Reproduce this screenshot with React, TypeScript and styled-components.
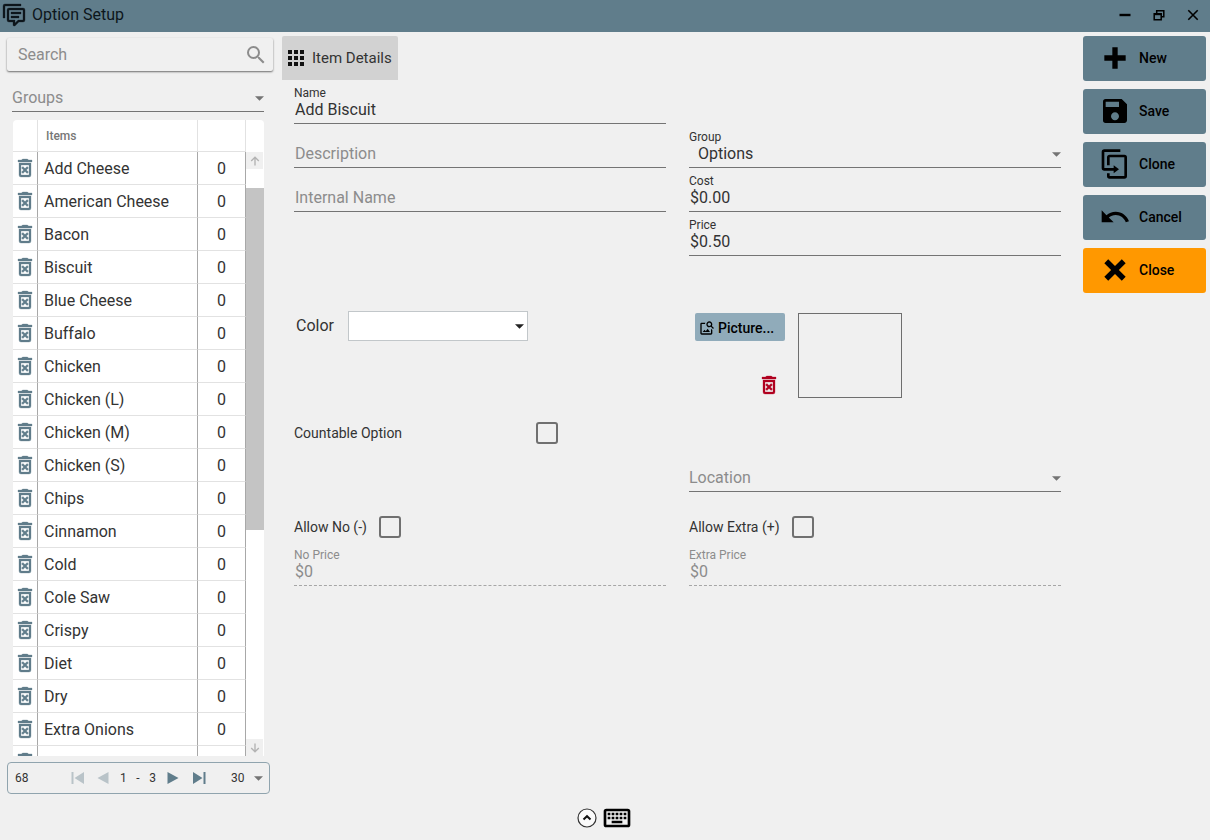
import React, { useId } from "react";
import styled, { createGlobalStyle, css } from "styled-components";
import { MdApps, MdSave, MdSearch, MdUndo } from "react-icons/md";

const slate = "#607d8b";
const ink = "#333333";
const muted = "#8c8c8c";
const line = "#747474";
const surface = "#f0f0f0";

const paths = {
  comments:
    "M12,23A1,1 0 0,1 11,22V19H7A2,2 0 0,1 5,17V7A2,2 0 0,1 7,5H21A2,2 0 0,1 23,7V17A2,2 0 0,1 21,19H16.9L13.2,22.71C13,22.89 12.76,23 12.5,23H12M13,17V20.08L16.08,17H21V7H7V17H13M3,15H1V3A2,2 0 0,1 3,1H19V3H3V15M9,9H19V11H9V9M9,13H17V15H9V13Z",
  trash:
    "M14.12,10.47L12,12.59L9.87,10.47L8.46,11.88L10.59,14L8.47,16.12L9.88,17.53L12,15.41L14.12,17.53L15.53,16.12L13.41,14L15.53,11.88L14.12,10.47M15.5,4L14.5,3H9.5L8.5,4H5V6H19V4H15.5M6,19A2,2 0 0,0 8,21H16A2,2 0 0,0 18,19V7H6V19M8,9H16V19H8V9Z",
  clone:
    "M11,17H4A2,2 0 0,1 2,15V3A2,2 0 0,1 4,1H16V3H4V15H11V13L15,16L11,19V17M19,21V7H8V13H6V7A2,2 0 0,1 8,5H19A2,2 0 0,1 21,7V21A2,2 0 0,1 19,23H8A2,2 0 0,1 6,21V19H8V21H19Z",
  plus: "M20 14H14V20H10V14H4V10H10V4H14V10H20V14Z",
  cross:
    "M20 6.91L17.09 4L12 9.09L6.91 4L4 6.91L9.09 12L4 17.09L6.91 20L12 14.91L17.09 20L20 17.09L14.91 12L20 6.91Z",
  imageSearch:
    "M15.5,9C16.2,9 16.79,8.76 17.27,8.27C17.76,7.79 18,7.2 18,6.5C18,5.83 17.76,5.23 17.27,4.73C16.79,4.23 16.2,4 15.5,4C14.83,4 14.23,4.23 13.73,4.73C13.23,5.23 13,5.83 13,6.5C13,7.2 13.23,7.79 13.73,8.27C14.23,8.76 14.83,9 15.5,9M19.31,8.91L22.41,12L21,13.41L17.86,10.31C17.08,10.78 16.28,11 15.47,11C14.22,11 13.16,10.58 12.3,9.7C11.45,8.83 11,7.77 11,6.5C11,5.27 11.45,4.2 12.33,3.33C13.2,2.45 14.27,2 15.5,2C16.77,2 17.83,2.45 18.7,3.33C19.58,4.2 20,5.27 20,6.5C20,7.33 19.78,8.13 19.31,8.91M16.5,18H5.5L8.25,14.5L10.22,16.83L12.94,13.31L16.5,18M18,13L20,15V20C20,20.55 19.81,21 19.41,21.4C19,21.79 18.53,22 18,22H4C3.45,22 3,21.79 2.6,21.4C2.21,21 2,20.55 2,20V6C2,5.47 2.21,5 2.6,4.59C3,4.19 3.45,4 4,4H9.5C9.2,4.64 9.03,5.31 9,6H4V20H18V13Z",
  keyboard:
    "M4,5A2,2 0 0,0 2,7V17A2,2 0 0,0 4,19H20A2,2 0 0,0 22,17V7A2,2 0 0,0 20,5H4M4,7H20V17H4V7M5,8V10H7V8H5M8,8V10H10V8H8M11,8V10H13V8H11M14,8V10H16V8H14M17,8V10H19V8H17M5,11V13H7V11H5M8,11V13H10V11H8M11,11V13H13V11H11M14,11V13H16V11H14M17,11V13H19V11H17M8,14V16H16V14H8Z",
};

const Glyph = ({ path, size, bold }: { path: string; size: number; bold?: boolean }) => (
  <svg
    width={size}
    height={size}
    viewBox="0 0 24 24"
    fill="currentColor"
    stroke={bold ? "currentColor" : "none"}
    strokeWidth="0.3"
    aria-hidden="true"
  >
    <path d={path} />
  </svg>
);

const GlobalStyle = createGlobalStyle`
  *, *::before, *::after { box-sizing: border-box; }
  body {
    margin: 0;
    background: ${surface};
    color: ${ink};
    font-family: Roboto, "Liberation Sans", sans-serif;
    font-size: 16px;
    line-height: 20px;
  }
  button, input, select { font: inherit; color: inherit; margin: 0; border-radius: 0; }
  svg { display: block; flex: none; }
`;

const Window = styled.div`
  display: flex;
  flex-direction: column;
  height: 100vh;
`;

const PlainButton = styled.button`
  display: flex;
  align-items: center;
  justify-content: center;
  padding: 0;
  border: 0;
  background: none;
  cursor: pointer;
`;

/* Title bar */

const TitleBar = styled.header`
  display: flex;
  align-items: center;
  flex: none;
  height: 32px;
  padding: 0 0 2px 2px;
  background: ${slate};
  color: #0d161b;
`;

const Title = styled.h1`
  flex: 1;
  margin: 0 0 0 6px;
  font-size: 16px;
  font-weight: 400;
  line-height: 20px;
`;

const WindowButton = styled(PlainButton)`
  width: 34px;
  height: 28px;
`;

/* Sidebar */

const Body = styled.div`
  display: flex;
  flex: 1;
  min-height: 0;
`;

const Sidebar = styled.aside`
  display: flex;
  flex-direction: column;
  flex: none;
  width: 282px;
  padding: 6px 9px 2px 7px;
`;

const SearchBox = styled.label`
  display: flex;
  align-items: center;
  flex: none;
  height: 33px;
  padding: 0 5px 0 11px;
  border-radius: 2px;
  background: ${surface};
  box-shadow: 0 1px 2px rgba(0, 0, 0, 0.55);
  color: ${muted};
`;

const SearchInput = styled.input`
  flex: 1;
  min-width: 0;
  padding: 0;
  border: 0;
  outline: 0;
  background: none;
  &::placeholder { color: ${muted}; opacity: 1; }
`;

const GroupFilter = styled.div`
  margin: 17px 9px 8px 5px;
`;

const ListPanel = styled.div`
  display: flex;
  flex: 1;
  min-height: 0;
  margin: 0 9px 6px 6px;
  overflow: hidden;
  border-radius: 4px 4px 0 0;
  background: #ffffff;
`;

const ListViewport = styled.div`
  flex: 1;
  min-width: 0;
  overflow: hidden;
`;

const ItemTable = styled.table`
  width: 100%;
  table-layout: fixed;
  border-collapse: separate;
  border-spacing: 0;
`;

const HeadCell = styled.th<{ $width?: number }>`
  width: ${(p) => (p.$width ? `${p.$width}px` : "auto")};
  height: 32px;
  padding: 0 8px;
  border-right: 1px solid #e2e2e2;
  border-bottom: 1px solid #e2e2e2;
  color: #777777;
  font-size: 12px;
  font-weight: 500;
  line-height: 16px;
  text-align: left;
`;

const Cell = styled.td<{ $icon?: boolean; $center?: boolean }>`
  height: 33px;
  padding: ${(p) => (p.$icon ? "0" : p.$center ? "2px 0 0" : "2px 6px 0")};
  border-right: 1px solid #a8a8a8;
  border-bottom: 1px solid #e2e2e2;
  line-height: 20px;
  text-align: ${(p) => (p.$center ? "center" : "left")};
  white-space: nowrap;
`;

const RowDelete = styled(PlainButton)`
  width: 24px;
  height: 32px;
  color: ${slate};
`;

const ScrollColumn = styled.div`
  display: flex;
  flex-direction: column;
  flex: none;
  width: 18px;
  padding-top: 32px;
`;

const ScrollButton = styled(PlainButton)`
  flex: none;
  width: 17px;
  height: 17px;
  background: ${surface};
  color: #b4b4b4;
`;

const ScrollTrack = styled.div`
  flex: 1;
  padding-top: 19px;
`;

const ScrollThumb = styled.div`
  height: 62%;
  background: #c4c4c4;
`;

const Pager = styled.nav`
  display: flex;
  align-items: center;
  flex: none;
  height: 32px;
  margin-right: 3px;
  padding: 0 6px 0 7px;
  border: 1px solid #90a4ae;
  border-radius: 4px;
  font-size: 12px;
  line-height: 16px;
`;

const PagerTotal = styled.span`
  width: 49px;
`;

const PagerButton = styled(PlainButton)`
  width: 26px;
  height: 24px;
  color: ${slate};
  &:disabled { color: #b9c3c8; }
`;

const PagerRange = styled.span`
  display: flex;
  justify-content: space-between;
  width: 44px;
  padding: 0 4px;
`;

const PagerSize = styled.div`
  flex: 1;
  margin-left: 19px;
`;

/* Form */

const Main = styled.main`
  flex: 1;
  min-width: 0;
  padding-top: 4px;
`;

const Tab = styled(PlainButton)`
  height: 44px;
  padding: 0 6px 0 2px;
  gap: 4px;
  border-radius: 2px 2px 0 0;
  background: #d2d2d2;
  font-size: 15px;
  svg { color: #111111; }
`;

const Form = styled.form`
  display: flex;
  flex-direction: column;
  padding: 0 22px 0 12px;
`;

const Columns = styled.div<{ $top?: number }>`
  display: grid;
  grid-template-columns: 1fr 1fr;
  column-gap: 23px;
  margin-top: ${(p) => p.$top ?? 0}px;
`;

const FieldColumn = styled.div<{ $skip?: boolean }>`
  display: flex;
  flex-direction: column;
  padding-top: ${(p) => (p.$skip ? 44 : 0)}px;
`;

const FieldBox = styled.div<{ $disabled?: boolean }>`
  display: flex;
  flex-direction: column;
  justify-content: flex-end;
  height: 44px;
  padding-bottom: 3px;
  border-bottom: 1px ${(p) => (p.$disabled ? "dashed #a6a6a6" : `solid ${line}`)};
  color: ${(p) => (p.$disabled ? muted : ink)};
`;

const FieldLabel = styled.label`
  font-size: 12px;
  line-height: 14px;
`;

const FieldInput = styled.input`
  width: 100%;
  height: 20px;
  padding: 0 1px;
  border: 0;
  outline: 0;
  background: none;
  &::placeholder { color: ${muted}; opacity: 1; }
`;

const SelectFrame = styled.div<{ $compact?: boolean; $boxed?: boolean }>`
  display: grid;
  grid-template-columns: minmax(0, 1fr) 9px;
  align-items: center;
  color: ${(p) => (p.$boxed ? "#222222" : line)};
  ${(p) =>
    p.$compact &&
    css`
      padding-bottom: 3px;
      border-bottom: 1px solid ${line};
    `}
  ${(p) =>
    p.$boxed &&
    css`
      width: 180px;
      height: 30px;
      padding: 0 3px;
      border: 1px solid #c2c7ca;
      background: #ffffff;
    `}
  svg { grid-area: 1 / 2; pointer-events: none; }
`;

const Select = styled.select<{ $muted?: boolean; $indent?: number }>`
  grid-area: 1 / 1 / 2 / 3;
  width: 100%;
  height: 20px;
  padding: 0 16px 0 ${(p) => p.$indent ?? 0}px;
  appearance: none;
  border: 0;
  outline: 0;
  background: none;
  color: ${(p) => (p.$muted ? muted : ink)};
`;

const Caret = () => (
  <svg width="9" height="5" viewBox="0 0 9 5" fill="currentColor" aria-hidden="true">
    <path d="M0 0.2H9L4.5 4.8Z" />
  </svg>
);

const ColorRow = styled.div`
  display: flex;
  align-items: center;
  align-self: start;
  padding-left: 2px;
  gap: 14px;
`;

const PictureRow = styled.div`
  display: flex;
  gap: 13px;
  padding: 2px 0 0 6px;
`;

const PictureActions = styled.div`
  display: flex;
  flex-direction: column;
  align-items: flex-end;
  justify-content: space-between;
`;

const PictureButton = styled(PlainButton)`
  width: 90px;
  height: 28px;
  justify-content: flex-start;
  padding: 2px 0 0 4px;
  gap: 3px;
  border-radius: 2px;
  background: #90abba;
  color: #000000;
  font-size: 14px;
  font-weight: 500;
`;

const ClearPicture = styled(PlainButton)`
  width: 32px;
  height: 26px;
  color: #b00020;
`;

const PicturePreview = styled.div`
  width: 104px;
  height: 85px;
  border: 1px solid #6e6e6e;
`;

const CheckRow = styled.label<{ $wide?: boolean }>`
  display: flex;
  align-items: center;
  gap: 12px;
  font-size: 14px;
  span { width: ${(p) => (p.$wide ? "230px" : "auto")}; }
`;

const CheckBox = styled.input`
  width: 22px;
  height: 22px;
  appearance: none;
  border: 2px solid #707070;
  border-radius: 3px;
  &:checked { background: ${slate}; }
`;

/* Actions and footer */

const Actions = styled.div`
  display: flex;
  flex-direction: column;
  flex: none;
  gap: 8px;
  width: 127px;
  padding: 4px 4px 0 0;
`;

const ActionButton = styled(PlainButton)<{ $accent?: boolean }>`
  justify-content: flex-start;
  height: 45px;
  padding: 0 0 1px 16px;
  gap: 8px;
  border-radius: 3px;
  background: ${(p) => (p.$accent ? "#ff9800" : slate)};
  color: #000000;
  font-size: 14px;
  font-weight: 500;
`;

const ActionIcon = styled.span`
  display: flex;
  justify-content: center;
  width: 32px;
`;

const Footer = styled.footer`
  display: flex;
  align-items: center;
  justify-content: center;
  flex: none;
  height: 44px;
  gap: 4px;
  color: #000000;
`;

type FieldProps = { label?: string; name: string; value?: string; disabled?: boolean };

const TextField = ({ label, name, value, disabled }: FieldProps) => {
  const id = useId();
  return (
    <FieldBox $disabled={disabled}>
      {label && <FieldLabel htmlFor={id}>{label}</FieldLabel>}
      <FieldInput
        id={id}
        aria-label={label ? undefined : name}
        placeholder={label ? undefined : name}
        defaultValue={value}
        disabled={disabled}
      />
    </FieldBox>
  );
};

const SelectField = ({ label, name, value }: FieldProps) => {
  const id = useId();
  return (
    <FieldBox>
      {label && <FieldLabel htmlFor={id}>{label}</FieldLabel>}
      <SelectFrame>
        <Select
          id={id}
          aria-label={label ? undefined : name}
          $muted={!value}
          $indent={value ? 9 : 0}
        >
          <option>{value ?? name}</option>
        </Select>
        <Caret />
      </SelectFrame>
    </FieldBox>
  );
};

const items = [
  "Add Cheese",
  "American Cheese",
  "Bacon",
  "Biscuit",
  "Blue Cheese",
  "Buffalo",
  "Chicken",
  "Chicken (L)",
  "Chicken (M)",
  "Chicken (S)",
  "Chips",
  "Cinnamon",
  "Cold",
  "Cole Saw",
  "Crispy",
  "Diet",
  "Dry",
  "Extra Onions",
  "French",
];

const actions = [
  { text: "New", icon: <Glyph path={paths.plus} size={32} /> },
  { text: "Save", icon: <MdSave size={32} /> },
  { text: "Clone", icon: <Glyph path={paths.clone} size={32} /> },
  { text: "Cancel", icon: <MdUndo size={32} /> },
  { text: "Close", icon: <Glyph path={paths.cross} size={32} />, accent: true },
];

export default function App() {
  return (
    <Window>
      <GlobalStyle />
      <TitleBar>
        <Glyph path={paths.comments} size={24} bold />
        <Title>Option Setup</Title>
        <WindowButton aria-label="Minimize">
          <svg width="12" height="12" viewBox="0 0 12 12" stroke="#000" strokeWidth="2.4">
            <path d="M0.5 6H11.5" />
          </svg>
        </WindowButton>
        <WindowButton aria-label="Restore">
          <svg width="12" height="12" viewBox="0 0 12 12" fill="none" stroke="#000">
            <path d="M3.7 4V1.7H10.8V7.7H8.5" strokeWidth="1.5" />
            <path d="M1.2 4.8H8.2V10.8H1.2Z" strokeWidth="1.5" />
            <path d="M1 5.2H8.4" strokeWidth="2" />
          </svg>
        </WindowButton>
        <WindowButton aria-label="Close window">
          <svg width="12" height="12" viewBox="0 0 12 12" stroke="#000" strokeWidth="1.6">
            <path d="M1.3 1.3L10.7 10.7M10.7 1.3L1.3 10.7" />
          </svg>
        </WindowButton>
      </TitleBar>

      <Body>
        <Sidebar>
          <SearchBox>
            <SearchInput aria-label="Search" placeholder="Search" />
            <MdSearch size={24} />
          </SearchBox>
          <GroupFilter>
            <SelectFrame $compact>
              <Select aria-label="Groups" $muted>
                <option>Groups</option>
              </Select>
              <Caret />
            </SelectFrame>
          </GroupFilter>

          <ListPanel>
            <ListViewport>
              <ItemTable>
                <thead>
                  <tr>
                    <HeadCell $width={25} aria-label="Delete" />
                    <HeadCell>Items</HeadCell>
                    <HeadCell $width={48} aria-label="Count" />
                  </tr>
                </thead>
                <tbody>
                  {items.map((item) => (
                    <tr key={item}>
                      <Cell $icon>
                        <RowDelete aria-label={`Delete ${item}`}>
                          <Glyph path={paths.trash} size={24} bold />
                        </RowDelete>
                      </Cell>
                      <Cell>{item}</Cell>
                      <Cell $center>0</Cell>
                    </tr>
                  ))}
                </tbody>
              </ItemTable>
            </ListViewport>
            <ScrollColumn>
              <ScrollButton aria-label="Scroll up">
                <svg width="10" height="10" viewBox="0 0 10 10" fill="none" stroke="currentColor" strokeWidth="1.4">
                  <path d="M5 9.5V1.5M1.2 5L5 1.2L8.8 5" />
                </svg>
              </ScrollButton>
              <ScrollTrack>
                <ScrollThumb />
              </ScrollTrack>
              <ScrollButton aria-label="Scroll down">
                <svg width="10" height="10" viewBox="0 0 10 10" fill="none" stroke="currentColor" strokeWidth="1.4">
                  <path d="M5 0.5V8.5M1.2 5L5 8.8L8.8 5" />
                </svg>
              </ScrollButton>
            </ScrollColumn>
          </ListPanel>

          <Pager aria-label="Pages">
            <PagerTotal>68</PagerTotal>
            <PagerButton disabled aria-label="First page">
              <svg width="13" height="12" viewBox="0 0 13 12" fill="currentColor">
                <path d="M0.5 0H2.5V12H0.5ZM13 0V12L3.5 6Z" />
              </svg>
            </PagerButton>
            <PagerButton disabled aria-label="Previous page">
              <svg width="12" height="12" viewBox="0 0 12 12" fill="currentColor">
                <path d="M11.5 0V12L0.5 6Z" />
              </svg>
            </PagerButton>
            <PagerRange>
              <span>1</span>
              <span>-</span>
              <span>3</span>
            </PagerRange>
            <PagerButton aria-label="Next page">
              <svg width="12" height="12" viewBox="0 0 12 12" fill="currentColor">
                <path d="M0.5 0V12L11.5 6Z" />
              </svg>
            </PagerButton>
            <PagerButton aria-label="Last page">
              <svg width="13" height="12" viewBox="0 0 13 12" fill="currentColor">
                <path d="M12.5 0H10.5V12H12.5ZM0 0V12L9.5 6Z" />
              </svg>
            </PagerButton>
            <PagerSize>
              <SelectFrame>
                <Select aria-label="Items per page">
                  <option>30</option>
                </Select>
                <Caret />
              </SelectFrame>
            </PagerSize>
          </Pager>
        </Sidebar>

        <Main>
          <Tab>
            <MdApps size={24} />
            Item Details
          </Tab>
          <Form>
            <Columns>
              <FieldColumn>
                <TextField label="Name" name="Name" value="Add Biscuit" />
                <TextField name="Description" />
                <TextField name="Internal Name" />
              </FieldColumn>
              <FieldColumn $skip>
                <SelectField label="Group" name="Group" value="Options" />
                <TextField label="Cost" name="Cost" value="$0.00" />
                <TextField label="Price" name="Price" value="$0.50" />
              </FieldColumn>
            </Columns>

            <Columns $top={55}>
              <ColorRow>
                <label htmlFor="color">Color</label>
                <SelectFrame $boxed>
                  <Select id="color">
                    <option aria-label="White" />
                  </Select>
                  <Caret />
                </SelectFrame>
              </ColorRow>
              <PictureRow>
                <PictureActions>
                  <PictureButton type="button">
                    <Glyph path={paths.imageSearch} size={16} />
                    Picture...
                  </PictureButton>
                  <ClearPicture type="button" aria-label="Remove picture">
                    <Glyph path={paths.trash} size={24} bold />
                  </ClearPicture>
                </PictureActions>
                <PicturePreview />
              </PictureRow>
            </Columns>

            <Columns $top={24}>
              <CheckRow $wide>
                <span>Countable Option</span>
                <CheckBox type="checkbox" />
              </CheckRow>
            </Columns>

            <Columns $top={4}>
              <div />
              <SelectField name="Location" />
            </Columns>

            <Columns $top={24}>
              <CheckRow>
                <span>Allow No (-)</span>
                <CheckBox type="checkbox" />
              </CheckRow>
              <CheckRow>
                <span>Allow Extra (+)</span>
                <CheckBox type="checkbox" />
              </CheckRow>
            </Columns>

            <Columns $top={4}>
              <TextField label="No Price" name="No Price" value="$0" disabled />
              <TextField label="Extra Price" name="Extra Price" value="$0" disabled />
            </Columns>
          </Form>
        </Main>

        <Actions>
          {actions.map((action) => (
            <ActionButton key={action.text} $accent={action.accent}>
              <ActionIcon>{action.icon}</ActionIcon>
              {action.text}
            </ActionButton>
          ))}
        </Actions>
      </Body>

      <Footer>
        <PlainButton aria-label="Show more">
          <svg width="20" height="20" viewBox="0 0 20 20" fill="none">
            <circle cx="10" cy="10" r="9" fill="#fafafa" stroke="#333333" strokeWidth="1.2" />
            <path d="M6.5 11.5L10 8.2L13.5 11.5" stroke="#111111" strokeWidth="2" />
          </svg>
        </PlainButton>
        <PlainButton aria-label="Keyboard">
          <Glyph path={paths.keyboard} size={32} />
        </PlainButton>
      </Footer>
    </Window>
  );
}
